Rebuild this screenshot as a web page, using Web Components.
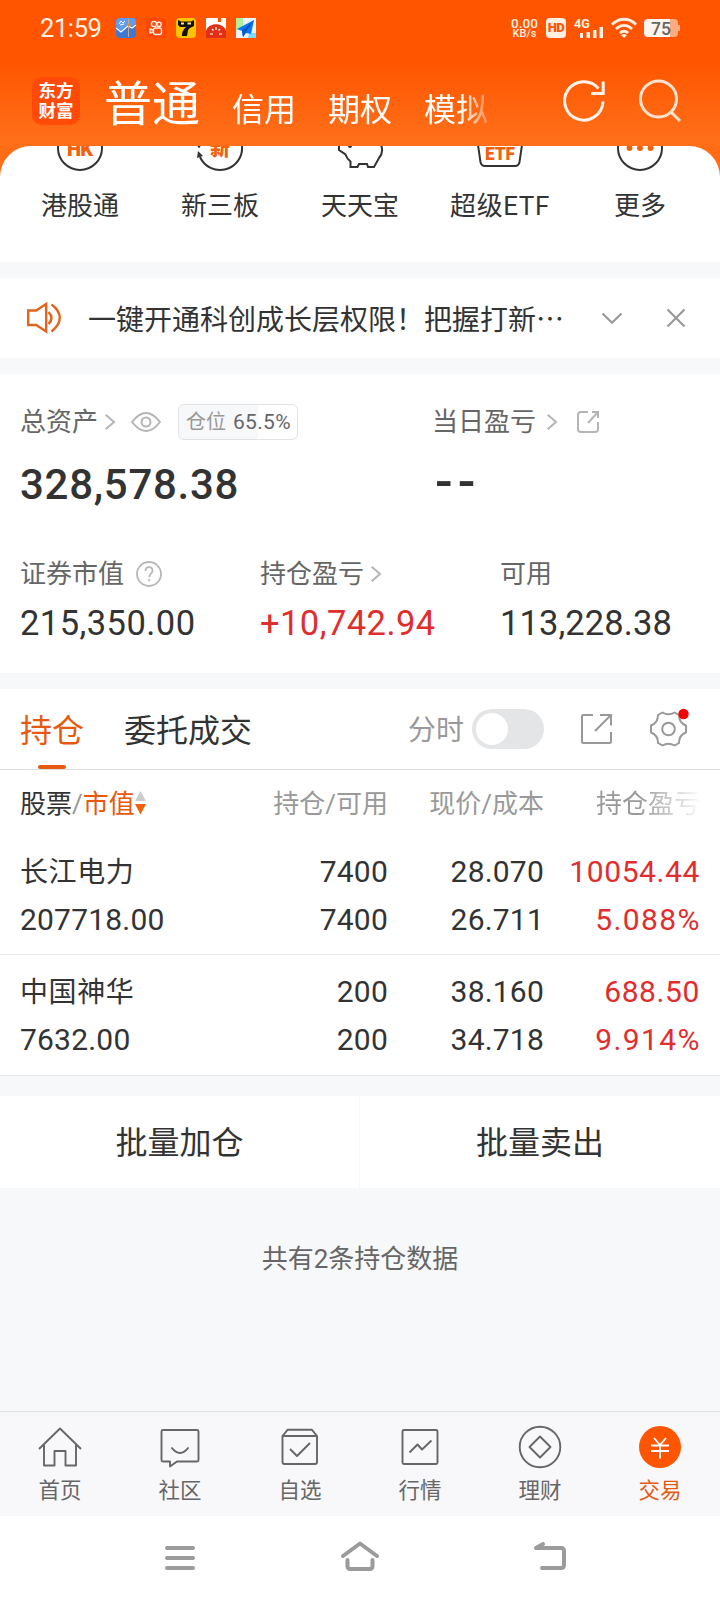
<!DOCTYPE html>
<html lang="zh-CN">
<head>
<meta charset="utf-8">
<title>普通交易</title>
<style>
  body {
    margin: 0;
    width: 720px;
    height: 1600px;
    overflow: hidden;
    display: flex;
    flex-direction: column;
    background: #f7f8fa;
    color: #333;
    font-family: Roboto, "Noto Sans CJK SC", sans-serif;
    --orange: #e65a10;
    --red: #e02e2e;
    --line: #dedfe1;
  }
  main {
    flex: 1;
    display: flex;
    flex-direction: column;
  }
</style>
</head>
<body>
  <app-header></app-header>
  <main>
    <service-panel>
      <service-item icon="hk">港股通</service-item>
      <service-item icon="xin">新三板</service-item>
      <service-item icon="pig">天天宝</service-item>
      <service-item icon="etf">超级ETF</service-item>
      <service-item icon="more">更多</service-item>
    </service-panel>
    <notice-bar>一键开通科创成长层权限！把握打新…</notice-bar>
    <asset-summary></asset-summary>
    <holding-tabs></holding-tabs>
    <holding-head></holding-head>
    <holding-row name="长江电力" value="207718.00" amount="7400" usable="7400" price="28.070" cost="26.711" profit="10054.44" rate="5.088%"></holding-row>
    <holding-row name="中国神华" value="7632.00" amount="200" usable="200" price="38.160" cost="34.718" profit="688.50" rate="9.914%"></holding-row>
    <batch-actions>
      <span>批量加仓</span>
      <span slot="right">批量卖出</span>
    </batch-actions>
    <list-footer>共有2条持仓数据</list-footer>
  </main>
  <tab-bar>
    <tab-item icon="home">首页</tab-item>
    <tab-item icon="chat">社区</tab-item>
    <tab-item icon="check">自选</tab-item>
    <tab-item icon="chart">行情</tab-item>
    <tab-item icon="coin">理财</tab-item>
    <tab-item icon="trade" active>交易</tab-item>
  </tab-bar>
  <system-nav></system-nav>

<script>
// Every element below renders its template into an open shadow root
class BaseElement extends HTMLElement {
  constructor() {
    super();
    this.attachShadow({ mode: "open" });
  }

  connectedCallback() {
    const template = document.createElement("template");
    template.innerHTML = `<style>
      :host, * { box-sizing: border-box; }
      svg { display: block; flex: none; overflow: visible; fill: none; }
      ${this.getStyles()}
    </style>${this.getTemplate()}`;
    this.shadowRoot.appendChild(template.content.cloneNode(true));
  }
}

// Small icons used by more than one element
const arrowRight = `<svg class="arrow" width="10" height="16" viewBox="0 0 10 16" stroke="#b5b5b5" stroke-width="2"><path d="M.7.7 9 8 .7 15.3"/></svg>`;

class StatusBar extends BaseElement {
  getStyles() {
    return `
      :host { display: flex; height: 56px; padding: 0 40px; align-items: center; color: #fff0e2; }
      .time { width: 76px; font-size: 25.5px; line-height: 30px; letter-spacing: -.4px; }
      .apps { display: flex; gap: 10px; flex: 1; }
      .speed { width: 27px; text-align: center; font-size: 13.5px; line-height: 12px; font-weight: 500; white-space: nowrap; }
      .speed small { display: block; font-size: 11px; line-height: 10px; }
      .hd { margin: 0 8px 0 8px; width: 20px; height: 20px; border-radius: 4px; background: #fff0e2; color: #ff5500;
            font-size: 13px; line-height: 20px; font-weight: 900; text-align: center; letter-spacing: -.5px; }
      .wifi { margin: 0 7px; }`;
  }

  getTemplate() {
    return `
      <span class="time">21:59</span>
      <div class="apps">
        <svg width="20" height="20"><rect width="20" height="20" rx="4" fill="#3f78d0"/><path d="M0 10V4a4 4 0 0 1 4-4h12a4 4 0 0 1 4 4v2l-5 3-3-2-7 6-5-4z" fill="#609bf0"/><path d="M0 10l5 4 7-6 4 2 4-3" stroke="#fff" stroke-width="1.2"/><path d="M3 6l2-3 2 2 2-2M4 7l4-1" stroke="#fff"/><path d="M12.5 1v18" stroke="#c9a98a"/><circle cx="13" cy="7" r="1.4" fill="#f80"/></svg>
        <svg width="20" height="20"><rect width="20" height="20" rx="3" fill="#ff4709"/><g stroke="#fff0e2" stroke-width="1.4"><circle cx="8" cy="6" r="2.6"/><circle cx="13" cy="6.3" r="2.2"/><rect x="7.5" y="10" width="8" height="6.5" rx="2"/><path d="M7 12l-3-1v4l3-1"/></g></svg>
        <svg width="20" height="20"><rect width="20" height="20" rx="4" fill="#ffc400"/><path d="M2 2l3 1.5h10L18 2v6l-4 2c-3 2-2 5-3 8H6c0-5 2-7 4-9H4L2 7z" fill="#111"/><path d="M5 5.5h3M11.5 5.5h3.5" stroke="#ffe58a" stroke-width="2"/></svg>
        <svg width="20" height="20"><path d="M0 20V0h12v4h3V0h5v20z" fill="#fff"/><path d="M0 20v-7c2-9 18-9 20 0v7z" fill="#e03018"/><path d="M4 16h3M13 16h3M6 11l1.5 1.5M14 11l-1.5 1.5M10 9v3" stroke="#fff" stroke-width="1.2"/></svg>
        <svg width="20" height="20"><path d="M0 0h20v20H0z" fill="#e8f5ff"/><path d="M0 0h7v12H0z" fill="#b5ee9b"/><path d="M13 15h7v5h-8z" fill="#7ed9ff"/><path d="M18 2L1 11l5 2 1 6 3-4 5 1z" fill="#0879f2"/><path d="M18 2L6 13l1 6 3-5z" fill="#0755c2"/></svg>
      </div>
      <div class="speed">0.00<small>KB/s</small></div>
      <span class="hd">HD</span>
      <svg width="30" height="20"><text x="0" y="9.5" fill="#fff0e2" font-size="12.5" font-weight="700">4G</text><path d="M6 15h3v5H6zM12.500 14H16v6h-3.500zM19 12h3.500v8H19zM25.500 9H29v11h-3.500z" fill="#fff0e2"/></svg>
      <svg class="wifi" width="26" height="20" stroke="#fff0e2" stroke-width="2.8"><path d="M1 6.500C8-.5 18-.5 25 6.500M5 11c5-4.700 11-4.700 16 0M8.800 15c2.700-2.300 5.700-2.300 8.400 0"/><path d="M13 20l-3-3c2-1.500 4-1.500 6 0z" fill="#fff0e2" stroke="none"/></svg>
      <svg width="36" height="18"><path d="M26 0h4a4 4 0 0 1 4 4v2h2v6h-2v2a4 4 0 0 1-4 4h-4z" fill="#ffac80"/><path d="M4 0h22v18H4a4 4 0 0 1-4-4V4a4 4 0 0 1 4-4z" fill="#fff5ee"/><text x="7" y="15.5" fill="#666" font-size="17.5" font-weight="500">75</text></svg>`;
  }
}

class AppHeader extends BaseElement {
  getStyles() {
    return `
      :host { display: block; height: 146px; background: linear-gradient(#ff5500 62px, #ff6f19 140px); color: #fff; }
      .bar { display: flex; height: 90px; padding: 0 38px 0 32px; align-items: center; }
      .logo { width: 48px; height: 48px; margin: 0 24px 0 0; padding-top: 4px; border-radius: 10px; background: #ff4a08;
              font-size: 17.5px; line-height: 20px; font-weight: 700; text-align: center; }
      nav { display: flex; gap: 32px; width: 388px; align-items: baseline; font-size: 32px; line-height: 60px; margin-top: 12px;
            white-space: nowrap; -webkit-mask: linear-gradient(90deg, #000 358px, transparent 392px); mask: linear-gradient(90deg, #000 358px, transparent 392px); }
      b { font-size: 48px; font-weight: 400; }
      .refresh { margin-left: 71px; }
      .search { margin-left: 34px; }`;
  }

  getTemplate() {
    return `
      <status-bar></status-bar>
      <div class="bar">
        <div class="logo">东方<br>财富</div>
        <nav><b>普通</b><span>信用</span><span>期权</span><span>模拟</span></nav>
        <svg class="refresh" width="42" height="42" stroke="#fff3ea" stroke-width="3"><path d="M40 21.500A19.200 19.200 0 1 1 35.500 8.500M40.200 1.500V13.500H28"/></svg>
        <svg class="search" width="42" height="42" stroke="#ffe3d0" stroke-width="3"><circle cx="19.5" cy="19" r="18"/><path d="M32 32l9 9"/></svg>
      </div>`;
  }
}

class ServicePanel extends BaseElement {
  getStyles() {
    return `
      :host { display: block; background: #ff6c16; border-bottom: 16px solid #f7f8fa; }
      .panel { display: grid; grid-template-columns: repeat(5, 140px); justify-content: center; height: 116px; background: #fff;
               border-radius: 31px 31px 0 0; overflow: hidden; }`;
  }

  getTemplate() {
    return `<div class="panel"><slot></slot></div>`;
  }
}

// The origin of each drawing is the middle of the icon, its top half is scrolled away
const serviceIcons = {
  hk: `<circle r="22"/><text y="8" font-size="20" textLength="26">HK</text>`,
  xin: `<path d="M22 -2A22 22 0 0 1-20 9"/><path d="M-23 10l1-7 5 5z" fill="#333" stroke="none"/><circle cx="-21" cy="-1.5" r="1.3" fill="#333" stroke="none"/><text y="7.5" font-size="20">新</text>`,
  pig: `<path d="M-21-3V2l6.500 4.500c1 3 2.500 5 5 7V19h7l1.500-3H7l1 3h6l5-9q5-6 2-13"/><circle cx="-10" cy="-2" r="2" fill="#333" stroke="none"/>`,
  etf: `<path d="M-22-3l2.500 17q.7 4 4.500 4H15q3.800 0 4.500-4L22-3"/><text y="12" font-size="18.5" textLength="30" lengthAdjust="spacingAndGlyphs">ETF</text>`,
  more: `<circle r="22"/><g fill="#f2600c" stroke="none"><circle cx="-10.5" r="2.9"/><circle r="2.9"/><circle cx="10.5" r="2.9"/></g>`,
};

class ServiceItem extends BaseElement {
  getStyles() {
    return `
      :host { display: flex; flex-direction: column; align-items: center; font-size: 26px; line-height: 36px; }
      :host([icon="etf"]) { letter-spacing: .6px; }
      svg { overflow: hidden; margin-bottom: 15px; stroke: #333; stroke-width: 2; letter-spacing: 0; }
      text { fill: #f2600c; stroke: none; font-weight: 900; text-anchor: middle; }`;
  }

  getTemplate() {
    return `<svg width="60" height="27" viewBox="-30 -2 60 27">${serviceIcons[this.getAttribute("icon")]}</svg><slot></slot>`;
  }
}

class NoticeBar extends BaseElement {
  getStyles() {
    return `
      :host { display: flex; height: 96px; padding: 0 35px 0 26px; align-items: center; background: #fff; border-bottom: 16px solid #f7f8fa;
              font: 28px/40px "Noto Sans CJK SC", sans-serif; }
      .text { margin: 0 38px 0 26px; width: 476px; white-space: nowrap; }
      .close { margin-left: 45px; }`;
  }

  getTemplate() {
    return `
      <svg width="36" height="32" stroke="#e2651f" stroke-width="2.4"><path d="M2.200 8.500h8L20.200 2v27.500l-10-6.500h-8zM22.500 10q6 6 0 12M25.500 2.500c11 8 11 18.500 0 27"/></svg>
      <span class="text"><slot></slot></span>
      <svg width="20" height="11" stroke="#999" stroke-width="2.2"><path d="M.5.500L10 9.700 19.500.500"/></svg>
      <svg class="close" width="18" height="18" stroke="#999" stroke-width="2.2"><path d="M.5.500l17 17M17.500.500l-17 17"/></svg>`;
  }
}

class AssetSummary extends BaseElement {
  getStyles() {
    return `
      :host { display: block; height: 315px; padding: 30px 20px 0; background: #fff; border-bottom: 16px solid #f7f8fa; }
      .main { display: grid; grid-template-columns: 412px 1fr; height: 152px; }
      .sub { display: grid; grid-template-columns: 240px 240px 1fr; }
      .label { display: flex; height: 36px; align-items: center; color: #666; font-size: 26px; line-height: 36px; }
      .label .arrow { margin-left: 7px; }
      .day .arrow { margin-left: 11px; }
      .eye { margin: 0 17px 0 16px; }
      .ratio { width: 120px; height: 36px; border: 1px solid #e2e3e5; border-radius: 6px; padding-left: 7px; line-height: 35px;
               white-space: nowrap; background: linear-gradient(90deg, #f7f8fa 79px, #fff 79px); font-size: 20px; color: #999; }
      .ratio span { color: #666; margin-left: 7px; font-size: 21px; letter-spacing: .3px; }
      .total { font-size: 42px; line-height: 50px; font-weight: 500; margin-top: 20px; letter-spacing: .7px; }
      .none { font-size: 52px; letter-spacing: 5px; margin: 17px 0 0 3px; }
      .value { font-size: 34.5px; line-height: 44px; margin-top: 9px; letter-spacing: .45px; }
      .usable { letter-spacing: .1px; }
      .red { color: var(--red); }
      .share { margin-left: 20px; }
      .help { margin-left: 12px; }`;
  }

  getTemplate() {
    return `
      <div class="main">
        <div>
          <div class="label">总资产${arrowRight}
            <svg class="eye" width="30" height="20" stroke="#b5b5b5" stroke-width="2"><path d="M1 10q14-18 28 0-14 18-28 0z"/><circle cx="15" cy="10" r="4.5"/></svg>
            <div class="ratio">仓位<span>65.5%</span></div>
          </div>
          <div class="total">328,578.38</div>
        </div>
        <div>
          <div class="label day">当日盈亏${arrowRight}
            <svg class="share" width="23" height="23" stroke="#b5b5b5" stroke-width="2"><path d="M11 1H4Q1 1 1 4v14q0 3 3 3h14q3 0 3-3v-7M15 1h6v6M21 1L11 12"/></svg>
          </div>
          <div class="total none">--</div>
        </div>
      </div>
      <div class="sub">
        <div>
          <div class="label">证券市值
            <svg class="help" width="26" height="26" stroke="#b8b8b8" stroke-width="1.8"><circle cx="13" cy="13" r="12"/><path d="M9.500 10q0-3.800 3.500-3.800t3.500 3.500c0 3-3.300 3-3.300 6.500M13.200 18v2.200"/></svg>
          </div>
          <div class="value">215,350.00</div>
        </div>
        <div>
          <div class="label">持仓盈亏${arrowRight}</div>
          <div class="value red">+10,742.94</div>
        </div>
        <div>
          <div class="label">可用</div>
          <div class="value usable">113,228.38</div>
        </div>
      </div>`;
  }
}

class HoldingTabs extends BaseElement {
  getStyles() {
    return `
      :host { display: flex; height: 81px; padding: 0 33px 0 20px; align-items: center; background: #fff; border-bottom: 1px solid var(--line);
              font-size: 32px; line-height: 80px; }
      .tab { align-self: flex-start; height: 80px; padding-top: 2px; margin-right: 40px; }
      .active { display: flex; flex-direction: column; align-items: center; color: var(--orange); }
      .active::after { content: ""; width: 28px; height: 4px; margin-top: -6px; border-radius: 2px; background: var(--orange); flex: none; }
      .minute { margin: 4px 0 0 auto; color: #999; font-size: 28px; }
      .toggle { width: 72px; height: 40px; margin: 0 37px 0 8px; padding: 4px; border-radius: 20px; background: #e4e5e7; }
      .toggle i { display: block; width: 32px; height: 32px; border-radius: 50%; background: #fff; }
      .gear { margin-left: 38px; }`;
  }

  getTemplate() {
    return `
      <span class="tab active">持仓</span>
      <span class="tab">委托成交</span>
      <span class="minute">分时</span>
      <div class="toggle"><i></i></div>
      <svg width="31" height="30" stroke="#999" stroke-width="2"><path d="M12 1H2.500Q1 1 1 2.500v25Q1 29 2.500 29h26q1.500 0 1.500-1.500V18M19 1h11v10.500M29.500 1.500L14 17"/></svg>
      <svg class="gear" width="37" height="36" viewBox="0 0 37 36" stroke="#999" stroke-width="2" stroke-linejoin="round"><path d="M12.500 1.500Q18.500 5 24.500 1.500L29 4q0 8 7 10.500v7Q29 24 29 32l-4.500 2.500q-6-3.500-12 0L8 32q0-8-7-10.500v-7Q8 12 8 4z"/><circle cx="18.5" cy="18" r="6.3"/><circle cx="33.5" cy="3" r="5.2" fill="#f00" stroke="none"/></svg>`;
  }
}

// Column widths shared by the head and the rows of the list
const columns = "display: grid; grid-template-columns: 212px 156px 156px 156px; padding: 0 20px; background: #fff; white-space: nowrap;";

class HoldingHead extends BaseElement {
  getStyles() {
    return `
      :host { ${columns} height: 68px; text-align: right; color: #999; font-size: 26px; line-height: 68px; }
      .first { display: flex; align-items: center; }
      .first b { font-weight: 400; color: #333; }
      .first em { font-style: normal; color: var(--orange); }
      .first svg { margin-top: -2px; }
      .fade { -webkit-mask: linear-gradient(90deg, #000 94px, transparent 159px); mask: linear-gradient(90deg, #000 94px, transparent 159px); }`;
  }

  getTemplate() {
    return `
      <div class="first"><b>股票</b>/<em>市值</em>
        <svg width="11" height="24"><path d="M5.500 0L11 10H0z" fill="#ccc"/><path d="M0 13h11L5.500 23.500z" fill="#f2600c"/></svg>
      </div>
      <div>持仓/可用</div>
      <div>现价/成本</div>
      <div class="fade">持仓盈亏</div>`;
  }
}

class HoldingRow extends BaseElement {
  getStyles() {
    return `
      :host { ${columns} height: 121px; padding-top: 13px; border-bottom: 1px solid #e8e9eb; text-align: right; font-size: 30px; line-height: 48px;
              letter-spacing: .2px; }
      :host(:first-of-type) { height: 117px; padding-top: 10px; }
      .first { text-align: left; }
      .name { height: 48px; padding-top: 1px; font-size: 28px; letter-spacing: .6px; }
      .red { color: var(--red); letter-spacing: .6px; }
      .rate { letter-spacing: 1.4px; margin-right: -1px; }`;
  }

  getTemplate() {
    const get = (name) => this.getAttribute(name);
    return `
      <div class="first"><div class="name">${get("name")}</div><div>${get("value")}</div></div>
      <div>${get("amount")}<br>${get("usable")}</div>
      <div>${get("price")}<br>${get("cost")}</div>
      <div class="red">${get("profit")}<div class="rate">${get("rate")}</div></div>`;
  }
}

class BatchActions extends BaseElement {
  getStyles() {
    return `
      :host { display: grid; grid-template-columns: 359px 1fr; gap: 1px; height: 92px; margin-top: 20px; text-align: center;
              font-size: 32px; line-height: 94px; }
      div { height: 92px; background: #fff; }`;
  }

  getTemplate() {
    return `<div><slot></slot></div><div><slot name="right"></slot></div>`;
  }
}

class ListFooter extends BaseElement {
  getStyles() {
    return `:host { display: block; padding-top: 51px; text-align: center; color: #666; font-size: 26px; line-height: 40px; }`;
  }

  getTemplate() {
    return `<slot></slot>`;
  }
}

class TabBar extends BaseElement {
  getStyles() {
    return `:host { display: grid; grid-template-columns: repeat(6, 1fr); height: 105px; flex: none; border-top: 1px solid #e2e3e5; background: #f8f8fa; }`;
  }

  getTemplate() {
    return `<slot></slot>`;
  }
}

const tabIcons = {
  home: `<path d="M1 22L22 1.500 43 22M6 18v20.500h10.500V24h11v14.500H38V18"/>`,
  chat: `<path d="M5 3h34q1.500 0 1.500 1.500V33q0 1.500-1.500 1.500H19l-7 5v-5H5q-1.500 0-1.500-1.500V4.500Q3.500 3 5 3zM13.500 20.500q8.500 11 17 0"/>`,
  check: `<path d="M4.500 9l5-6.200h24.500l5 6.200M4.500 9h34.500v26q0 2-2 2H6.500q-2 0-2-2zM12 22l7 7 13-13"/>`,
  chart: `<rect x="4.5" y="3" width="35" height="34" rx="1.5"/><path d="M11.500 25.500l8-8 4.500 5 9.500-9"/>`,
  coin: `<circle cx="22" cy="20" r="20.3"/><path d="M22 9.500L32.500 20 22 30.500 11.500 20z"/>`,
  trade: `<circle cx="22" cy="20" r="21" fill="#ff5500" stroke="none"/><path d="M16 11l6 7 6-7M13 18.500h18M13 24h18M22 18v13.500" stroke="#fff"/>`,
};

class TabItem extends BaseElement {
  getStyles() {
    return `
      :host { display: flex; flex-direction: column; align-items: center; padding-top: 15px; color: #666; font-size: 21.5px; line-height: 30px; }
      :host([active]) { color: var(--orange); }
      svg { margin-bottom: 7px; stroke: #666; stroke-width: 1.9; stroke-linejoin: round; }`;
  }

  getTemplate() {
    return `<svg width="44" height="42">${tabIcons[this.getAttribute("icon")]}</svg><slot></slot>`;
  }
}

class SystemNav extends BaseElement {
  getStyles() {
    return `
      :host { display: flex; flex: none; height: 84px; padding: 0 154px 2px 165px; align-items: center; background: #fff; }
      svg { stroke: #9b9b9b; stroke-width: 4; stroke-linecap: round; stroke-linejoin: round; }
      .home { margin: -2px auto 0 146px; }`;
  }

  getTemplate() {
    return `
      <svg width="30" height="30"><path d="M2 6h26M2 16h26M2 26h26"/></svg>
      <svg class="home" width="38" height="30"><path d="M2 15L19 2.500 36 15M6.500 19v6q0 3 3 3h19q3 0 3-3v-6"/></svg>
      <svg width="32" height="30"><path d="M9 2L2 6h25q3 0 3 3v14q0 3-3 3H8"/></svg>`;
  }
}

customElements.define("status-bar", StatusBar);
customElements.define("app-header", AppHeader);
customElements.define("service-panel", ServicePanel);
customElements.define("service-item", ServiceItem);
customElements.define("notice-bar", NoticeBar);
customElements.define("asset-summary", AssetSummary);
customElements.define("holding-tabs", HoldingTabs);
customElements.define("holding-head", HoldingHead);
customElements.define("holding-row", HoldingRow);
customElements.define("batch-actions", BatchActions);
customElements.define("list-footer", ListFooter);
customElements.define("tab-bar", TabBar);
customElements.define("tab-item", TabItem);
customElements.define("system-nav", SystemNav);
</script>
</body>
</html>
